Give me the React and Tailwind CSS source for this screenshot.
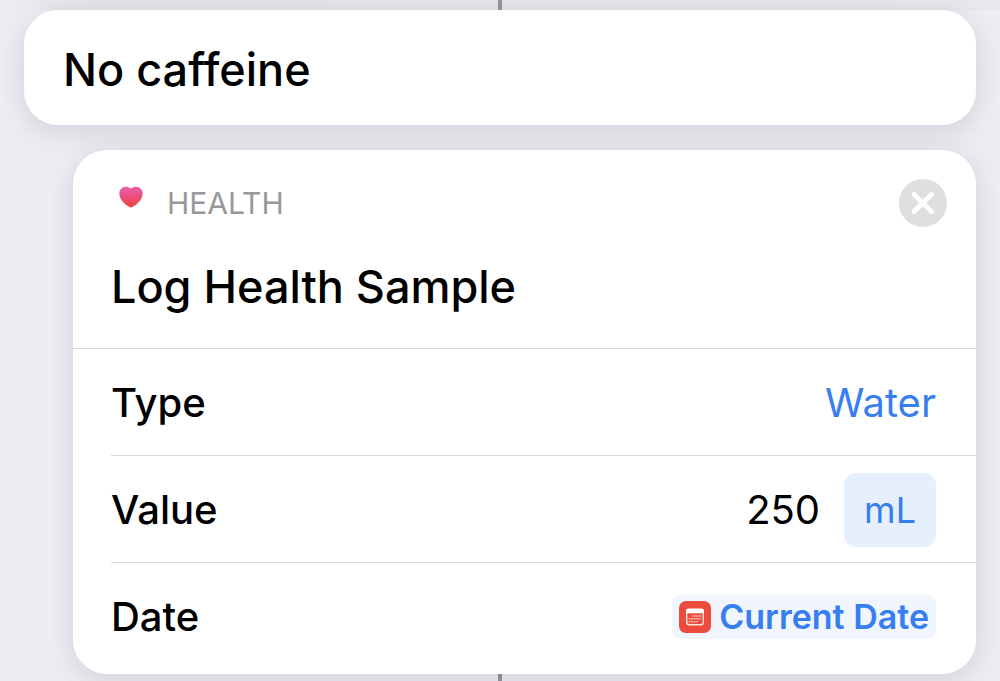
function HeartIcon() {
  return (
    <svg viewBox="0 0 24 22" className="h-[22px] w-6" aria-hidden="true">
      <defs>
        <linearGradient id="heart-fill" x1="0" y1="0" x2="0" y2="1">
          <stop offset="0" stopColor="#ea62ac" />
          <stop offset="0.5" stopColor="#ea4f7c" />
          <stop offset="1" stopColor="#ee4235" />
        </linearGradient>
      </defs>
      <path
        fill="url(#heart-fill)"
        d="M12 2.600C10.600 1.300 8.900.7 7 .7 3.200.7.3 3.500.3 7.400c0 5.600 4.800 10.400 10.300 13.600.9.500 1.900.500 2.800 0C18.900 17.800 23.700 13 23.700 7.400c0-3.900-2.900-6.700-6.700-6.700-1.900 0-3.600.6-5 1.900Z"
      />
    </svg>
  );
}

function CloseIcon() {
  return (
    <svg viewBox="0 0 48 48" className="size-12" aria-hidden="true">
      <path d="M15 15.500 32.500 32.500M32.500 15.500 15 32.500" fill="none" stroke="#fff" strokeWidth="4.800" strokeLinecap="round" />
    </svg>
  );
}

function CalendarIcon() {
  return (
    <svg viewBox="0 0 32 32" className="size-8 shrink-0" aria-hidden="true">
      <rect width="32" height="32" rx="7" fill="#ea4b3c" />
      <rect x="7.700" y="8.700" width="16.600" height="15" rx="2.500" fill="none" stroke="#fbe3df" strokeWidth="1.400" />
      <path d="M7 12.200V10a2.500 2.500 0 0 1 2.500-2.500h13A2.500 2.500 0 0 1 25 10v2.200Z" fill="#fff" />
      <path
        d="M13.500 14.900h9M9.700 17.800h12.800M9.700 20.700h9"
        stroke="#f6b5ad"
        strokeWidth="1.500"
        strokeDasharray="2 0.500"
      />
    </svg>
  );
}

function Row({ label, htmlFor, last, children }) {
  return (
    <div
      className={
        last
          ? "flex h-[111px] items-center justify-between pb-1 pr-10"
          : "flex h-[107px] items-center justify-between border-b border-[#d9d9dc] pt-[2px] pr-10"
      }
    >
      <label htmlFor={htmlFor} className="text-[40px] leading-[48px] font-medium">
        {label}
      </label>
      {children}
    </div>
  );
}

export default function App() {
  return (
    <main className="flex min-h-screen flex-col overflow-hidden bg-[#eeedf3] font-['Inter',sans-serif] text-black">
      <div className="flex h-[10px] justify-center bg-linear-to-r from-[#eeedf3] via-[#e5e4ea] via-10% to-[#e9e8ee]">
        <div className="w-1 bg-[#94969c]" />
      </div>

      <section className="mx-6 rounded-[34px] bg-white px-[39px] pt-8 pb-7 shadow-[0_6px_28px_rgba(60,55,80,0.16)]">
        <h1 className="text-[45px] leading-[55px] font-medium">No caffeine</h1>
      </section>

      <section className="mt-[25px] mr-6 ml-[73px] rounded-[34px] bg-white shadow-[0_6px_28px_rgba(60,55,80,0.16)]">
        <header className="border-b border-[#d9d9dc] pt-[29px] pr-[29px] pb-[34px] pl-[38px]">
          <div className="flex items-center gap-6">
            <div className="flex h-12 w-8 items-start justify-end pt-[7px]">
              <HeartIcon />
            </div>
            <span className="text-[30px] leading-[48px] text-[#98989b]">HEALTH</span>
            <button
              type="button"
              aria-label="Remove action"
              className="ml-auto size-12 rounded-full bg-[#dfdfe2]"
            >
              <CloseIcon />
            </button>
          </div>
          <h2 className="mt-8 text-[45px] leading-[55px] font-medium">Log Health Sample</h2>
        </header>

        <div className="pl-[38px]">
          <Row label="Type" htmlFor="sample-type">
            <button id="sample-type" type="button" className="text-[40px] leading-[48px] text-[#377ef0]">
              Water
            </button>
          </Row>
          <Row label="Value" htmlFor="sample-value">
            <div className="flex items-center gap-6">
              <input
                id="sample-value"
                type="text"
                inputMode="numeric"
                defaultValue="250"
                className="w-40 bg-transparent text-right text-[40px] leading-[48px] outline-none"
              />
              <button
                type="button"
                aria-label="Unit: mL"
                className="rounded-xl bg-[#e6f0fc] px-5 py-[15px] text-[36px] leading-[44px] text-[#377ef0]"
              >
                mL
              </button>
            </div>
          </Row>
          <Row label="Date" htmlFor="sample-date" last>
            <button
              id="sample-date"
              type="button"
              className="flex items-center gap-2 rounded-lg bg-[#f0f5fe] px-[7px] py-[2px] text-[34px] leading-[40px] font-semibold text-[#377ef0]"
            >
              <CalendarIcon />
              Current Date
            </button>
          </Row>
        </div>
      </section>

      <div className="flex flex-1 justify-center">
        <div className="w-1 bg-[#8a8b93]" />
      </div>
    </main>
  );
}
